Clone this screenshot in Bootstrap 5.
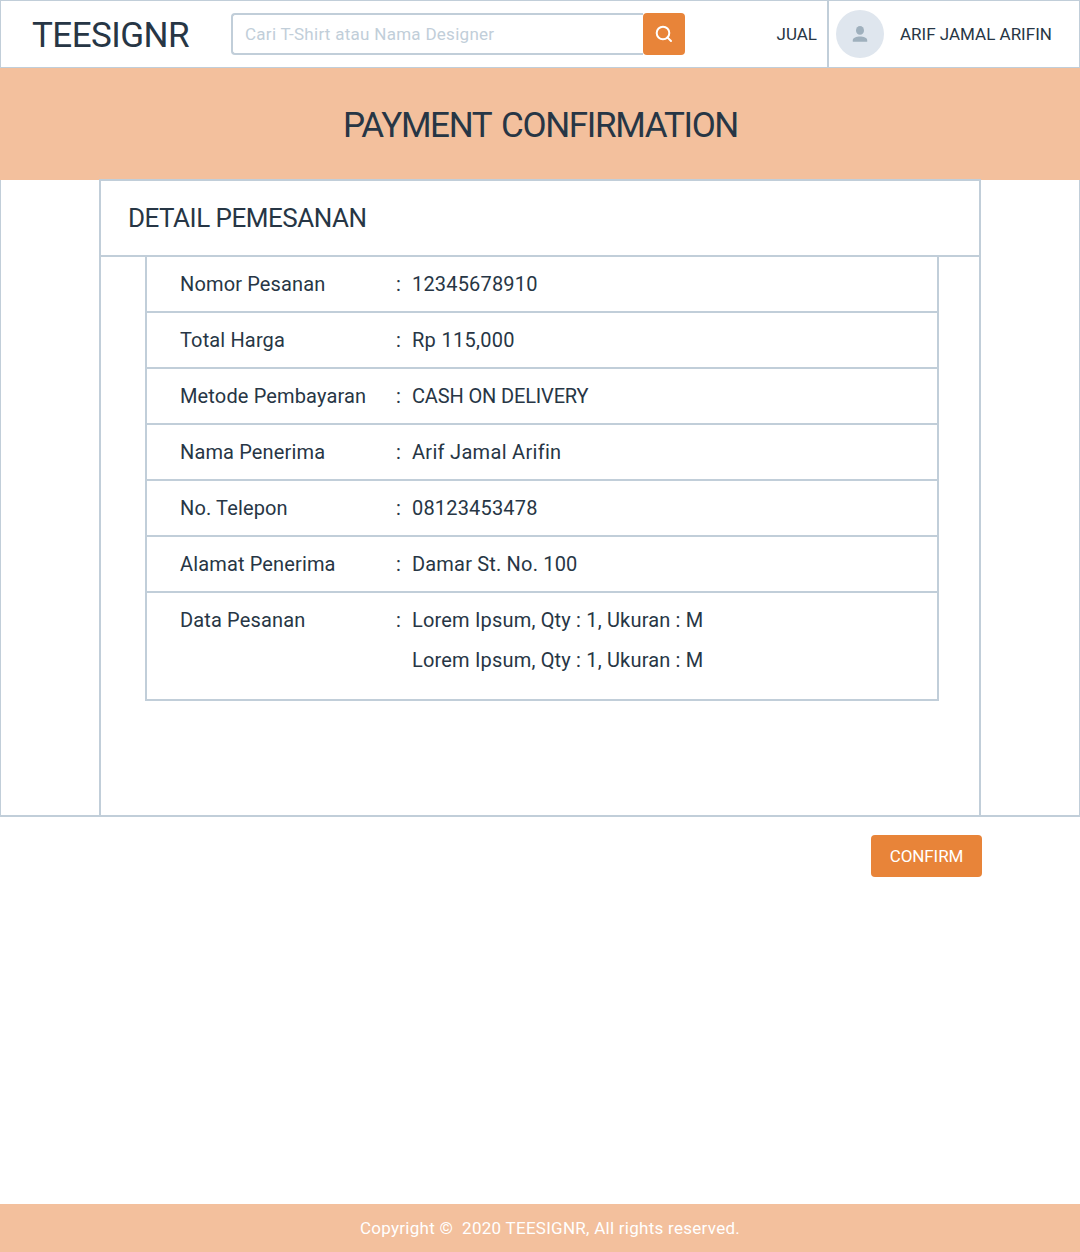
<!DOCTYPE html>
<html lang="id">
<head>
<meta charset="utf-8">
<meta name="viewport" content="width=device-width, initial-scale=1">
<title>TEESIGNR - Payment Confirmation</title>
<link href="https://cdn.jsdelivr.net/npm/bootstrap@5.3.0/dist/css/bootstrap.min.css" rel="stylesheet">
<style>
:root { --line: #c1ced9; --ink: #273645; --orange: #e88439; --peach: #f3c09d; }
body { font-family: Roboto, "Open Sans", sans-serif; color: var(--ink); background: #fff; min-height: 1252px; }
.topbar { height: 68px; border: 1px solid var(--line); }
.logo-text { width: 230px; padding: 3px 0 0 31px; font-size: 35px; line-height: 66px; letter-spacing: -.55px; color: var(--ink); }
.search-box { width: 454px; height: 42px; }
.search-box .form-control { border: 2px solid var(--line); border-right: 0; border-radius: 4px 0 0 4px; padding: 2px 12px 0; font-size: 17px; letter-spacing: .28px; }
.search-box .form-control::placeholder { color: var(--line); opacity: 1; }
.search-box .btn { width: 42px; background: var(--orange); border-radius: 4px !important; margin-left: 0 !important; }
.sell-link { font-size: 17px; padding: 2px 10px 0 0; color: var(--ink); }
.user-area { width: 252px; border-left: 2px solid var(--line); padding-left: 7px; font-size: 17px; }
.user-label { padding-top: 2px; }
.avatar { width: 48px; height: 48px; background: #dfe6ee; margin-right: 16px; }
.banner { height: 112px; background: var(--peach); }
.banner h1 { font-size: 35px; font-weight: 400; line-height: 112px; padding: 2px 0 0 1px; letter-spacing: -1.35px; word-spacing: 3px; }
.stage { height: 637px; border: 1px solid var(--line); border-width: 0 1px 2px; }
.order-panel { width: 882px; height: 636px; margin: -1px 0 0 98px; border: 2px solid var(--line); border-bottom: 0; }
.order-panel h2 { height: 76px; padding-left: 27px; font-size: 26px; font-weight: 400; line-height: 74px; letter-spacing: -.5px; border-bottom: 2px solid var(--line); }
.order-table { width: 794px; margin-left: 44px; border: 2px solid var(--line); border-top: 0; font-size: 20px; line-height: 40px; }
.order-row { height: 56px; padding: 7px 0 0 33px; border-bottom: 2px solid var(--line); }
.order-row:last-child { height: 106px; border-bottom: 0; }
.order-key { width: 216px; letter-spacing: .14px; }
.order-colon { width: 16px; }
.order-val { letter-spacing: .18px; }
.order-val.tight { letter-spacing: -.15px; }
.order-val.loose { letter-spacing: .3px; }
.btn-confirm { width: 111px; height: 42px; margin: 18px 98px 0 0; background: var(--orange); color: #fff; border: 0; border-radius: 4px; font-size: 17px; letter-spacing: -.1px; padding: 2px 0 0; }
.site-footer { height: 48px; line-height: 48px; background: var(--peach); color: #fff; font-size: 17px; letter-spacing: .27px; padding-left: 20px; white-space: pre; }
</style>
</head>
<body class="d-flex flex-column">
<header class="topbar d-flex align-items-center flex-shrink-0">
  <a class="logo-text text-decoration-none" href="#">TEESIGNR</a>
  <form class="search-box input-group flex-nowrap">
    <input class="form-control shadow-none" type="text" placeholder="Cari T-Shirt atau Nama Designer">
    <button class="btn p-0 d-flex align-items-center justify-content-center border-0" type="button" aria-label="Cari">
      <svg width="18" height="18" viewBox="0 0 18 18" fill="none" stroke="#fff" stroke-width="2"><circle cx="8" cy="8" r="6.3"/><path d="M12.4 12.4 16 16" stroke-linecap="round"/></svg>
    </button>
  </form>
  <a class="sell-link ms-auto text-decoration-none" href="#">JUAL</a>
  <div class="user-area d-flex align-items-center align-self-stretch">
    <span class="avatar rounded-circle d-flex align-items-center justify-content-center flex-shrink-0">
      <svg width="16" height="18" viewBox="0 0 16 18" fill="#9fb0bd"><ellipse cx="8" cy="5.4" rx="4" ry="4.3"/><path d="M.8 16.8v-1.6C.8 12.7 4.4 11.5 8 11.5s7.2 1.2 7.2 3.7v1.6z"/></svg>
    </span>
    <span class="user-label">ARIF JAMAL ARIFIN</span>
  </div>
</header>
<section class="banner text-center flex-shrink-0"><h1 class="m-0">PAYMENT CONFIRMATION</h1></section>
<main class="flex-grow-1 d-flex flex-column">
  <div class="stage">
    <section class="order-panel">
      <h2 class="m-0">DETAIL PEMESANAN</h2>
      <div class="order-table">
        <div class="order-row d-flex"><span class="order-key">Nomor Pesanan</span><span class="order-colon">:</span><span class="order-val">12345678910</span></div>
        <div class="order-row d-flex"><span class="order-key">Total Harga</span><span class="order-colon">:</span><span class="order-val loose">Rp 115,000</span></div>
        <div class="order-row d-flex"><span class="order-key">Metode Pembayaran</span><span class="order-colon">:</span><span class="order-val tight">CASH ON DELIVERY</span></div>
        <div class="order-row d-flex"><span class="order-key">Nama Penerima</span><span class="order-colon">:</span><span class="order-val loose">Arif Jamal Arifin</span></div>
        <div class="order-row d-flex"><span class="order-key">No. Telepon</span><span class="order-colon">:</span><span class="order-val">08123453478</span></div>
        <div class="order-row d-flex"><span class="order-key">Alamat Penerima</span><span class="order-colon">:</span><span class="order-val">Damar St. No. 100</span></div>
        <div class="order-row d-flex"><span class="order-key">Data Pesanan</span><span class="order-colon">:</span><span class="order-val">Lorem Ipsum, Qty : 1, Ukuran : M<br>Lorem Ipsum, Qty : 1, Ukuran : M</span></div>
      </div>
    </section>
  </div>
  <button class="btn btn-confirm align-self-end" type="button">CONFIRM</button>
</main>
<footer class="site-footer text-center flex-shrink-0">Copyright ©  2020 TEESIGNR, All rights reserved.</footer>
<script src="https://cdn.jsdelivr.net/npm/bootstrap@5.3.0/dist/js/bootstrap.bundle.min.js"></script>
</body>
</html>
